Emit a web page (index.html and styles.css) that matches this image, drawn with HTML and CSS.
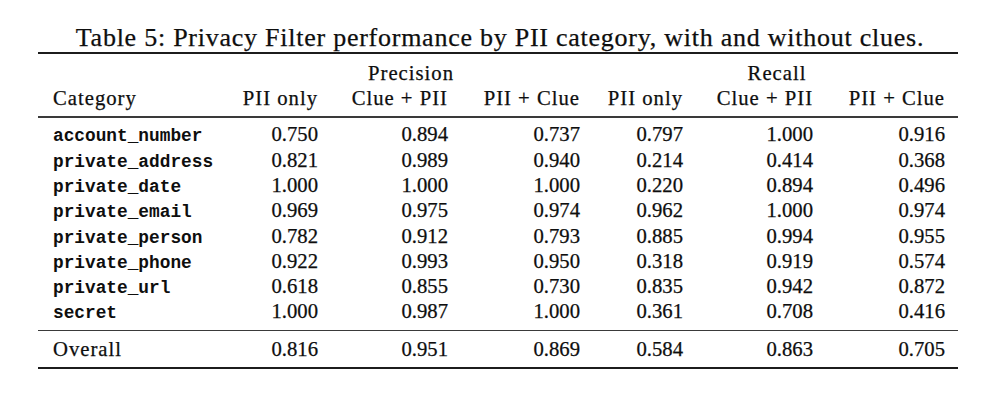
FILE: index.html
```html
<!DOCTYPE html>
<html lang="en">
<head>
<meta charset="utf-8">
<title>Table 5</title>
<link rel="stylesheet" href="styles.css">
</head>
<body>
<div class="page">
  <p class="caption">Table 5: Privacy Filter performance by PII category, with and without clues.</p>
  <table class="results">
    <colgroup>
      <col class="c0"><col class="c1"><col class="c2"><col class="c3"><col class="c4"><col class="c5"><col class="c6">
    </colgroup>
    <thead>
      <tr class="group-row">
        <th></th>
        <th colspan="3" class="group precision">Precision</th>
        <th colspan="3" class="group recall">Recall</th>
      </tr>
      <tr class="head-row">
        <th class="cat">Category</th>
        <th>PII only</th><th>Clue + PII</th><th>PII + Clue</th>
        <th>PII only</th><th>Clue + PII</th><th class="last">PII + Clue</th>
      </tr>
    </thead>
    <tbody class="body">
      <tr><td class="cat"><code>account_number</code></td><td>0.750</td><td>0.894</td><td>0.737</td><td>0.797</td><td>1.000</td><td class="last">0.916</td></tr>
      <tr><td class="cat"><code>private_address</code></td><td>0.821</td><td>0.989</td><td>0.940</td><td>0.214</td><td>0.414</td><td class="last">0.368</td></tr>
      <tr><td class="cat"><code>private_date</code></td><td>1.000</td><td>1.000</td><td>1.000</td><td>0.220</td><td>0.894</td><td class="last">0.496</td></tr>
      <tr><td class="cat"><code>private_email</code></td><td>0.969</td><td>0.975</td><td>0.974</td><td>0.962</td><td>1.000</td><td class="last">0.974</td></tr>
      <tr><td class="cat"><code>private_person</code></td><td>0.782</td><td>0.912</td><td>0.793</td><td>0.885</td><td>0.994</td><td class="last">0.955</td></tr>
      <tr><td class="cat"><code>private_phone</code></td><td>0.922</td><td>0.993</td><td>0.950</td><td>0.318</td><td>0.919</td><td class="last">0.574</td></tr>
      <tr><td class="cat"><code>private_url</code></td><td>0.618</td><td>0.855</td><td>0.730</td><td>0.835</td><td>0.942</td><td class="last">0.872</td></tr>
      <tr><td class="cat"><code>secret</code></td><td>1.000</td><td>0.987</td><td>1.000</td><td>0.361</td><td>0.708</td><td class="last">0.416</td></tr>
    </tbody>
    <tbody class="total">
      <tr><td class="cat word">Overall</td><td>0.816</td><td>0.951</td><td>0.869</td><td>0.584</td><td>0.863</td><td class="last">0.705</td></tr>
    </tbody>
  </table>
</div>
</body>
</html>
```
FILE: styles.css
```css
html, body {
  margin: 0;
  padding: 0;
  background: #ffffff;
}

.page {
  width: 1000px;
  height: 400px;
  box-sizing: border-box;
  padding-top: 23px;
  overflow: hidden;
  color: #0e0e0e;
  font-family: "Liberation Serif", "Times New Roman", serif;
  -webkit-text-stroke: 0.25px #0e0e0e;
}

.caption {
  margin: 0;
  font-size: 26px;
  line-height: 29px;
  text-align: center;
  letter-spacing: 0.75px;
}

.results {
  margin-left: 38px;
  width: 920px;
  table-layout: fixed;
  border-collapse: collapse;
  font-size: 20.7px;
  border-top: 2px solid #1c1c1c;
  border-bottom: 2px solid #1c1c1c;
}

.c0 { width: 192px; }
.c1 { width: 88px; }
.c2 { width: 130px; }
.c3 { width: 132px; }
.c4 { width: 103px; }
.c5 { width: 130px; }
.c6 { width: 145px; }

.results th,
.results td {
  padding: 0;
  font-weight: normal;
  text-align: right;
  white-space: nowrap;
  vertical-align: baseline;
}

.results th {
  letter-spacing: 1px;
}

.results .cat {
  text-align: left;
  padding-left: 15px;
}

.results .last {
  padding-right: 13px;
}

.group-row th {
  line-height: 26px;
  padding-top: 6px;
}

.results .group {
  text-align: center;
}

.results .precision {
  padding-left: 12px;
}

.results .recall {
  padding-left: 29px;
  padding-right: 13px;
}

.head-row th {
  line-height: 24px;
  padding-bottom: 6px;
  border-bottom: 2px solid #3a3a3a;
}

.body td {
  line-height: 25.3px;
}

.body tr:first-child td {
  padding-top: 4.4px;
}

.body tr:last-child td {
  padding-bottom: 5px;
  border-bottom: 1.5px solid #3a3a3a;
}

.total td {
  line-height: 25.3px;
  padding-top: 6px;
  padding-bottom: 5px;
}

.results .word {
  letter-spacing: 1px;
}

code {
  font-family: "Liberation Mono", "Courier New", monospace;
  font-weight: bold;
  font-size: 17.8px;
  line-height: 1;
  -webkit-text-stroke: 0;
}
```
